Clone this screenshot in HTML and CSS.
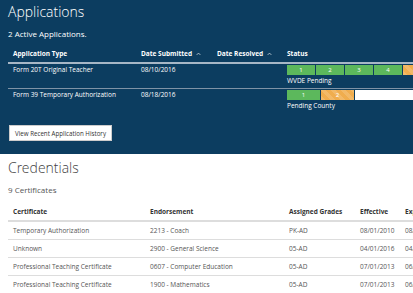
FILE: index.html
```html
<!DOCTYPE html>
<html lang="en">
<head>
    <meta charset="UTF-8">
    <title>Applications</title>
    <link rel="stylesheet" href="styles.css">
</head>
<body>

<div class="panel">
    <h1>Applications</h1>
    <p class="count">2 Active Applications.</p>

    <table class="apps">
        <thead>
            <tr>
                <th class="c-type">Application Type</th>
                <th class="c-sub">Date Submitted <svg class="caret" viewBox="0 0 8 5"><path d="M1 4 L4 1 L7 4"/></svg></th>
                <th class="c-res">Date Resolved <svg class="caret" viewBox="0 0 8 5"><path d="M1 4 L4 1 L7 4"/></svg></th>
                <th class="c-status">Status</th>
            </tr>
        </thead>
        <tbody>
            <tr>
                <td>Form 20T Original Teacher</td>
                <td>08/10/2016</td>
                <td></td>
                <td>
                    <div class="progress">
                        <span class="seg done">1</span>
                        <span class="seg done">2</span>
                        <span class="seg done">3</span>
                        <span class="seg done">4</span>
                        <span class="seg pending">5</span>
                    </div>
                    <div class="status-text">WVDE Pending</div>
                </td>
            </tr>
            <tr>
                <td>Form 39 Temporary Authorization</td>
                <td>08/18/2016</td>
                <td></td>
                <td>
                    <div class="progress">
                        <span class="seg wide done">1</span>
                        <span class="seg wide pending">2</span>
                        <span class="seg rest"></span>
                    </div>
                    <div class="status-text">Pending County</div>
                </td>
            </tr>
        </tbody>
    </table>

    <button class="btn">View Recent Application History</button>
</div>

<div class="section">
    <h2>Credentials</h2>
    <p class="count">9 Certificates</p>

    <table class="creds">
        <thead>
            <tr>
                <th class="k-cert">Certificate</th>
                <th class="k-end">Endorsement</th>
                <th class="k-grade">Assigned Grades</th>
                <th class="k-eff">Effective</th>
                <th class="k-exp">Expiration</th>
            </tr>
        </thead>
        <tbody>
            <tr><td>Temporary Authorization</td><td>2213 - Coach</td><td>PK-AD</td><td>08/01/2010</td><td>08/01/2011</td></tr>
            <tr><td>Unknown</td><td>2900 - General Science</td><td>05-AD</td><td>04/01/2016</td><td>04/01/2017</td></tr>
            <tr><td>Professional Teaching Certificate</td><td>0607 - Computer Education</td><td>05-AD</td><td>07/01/2013</td><td>06/30/2018</td></tr>
            <tr><td>Professional Teaching Certificate</td><td>1900 - Mathematics</td><td>05-AD</td><td>07/01/2013</td><td>06/30/2018</td></tr>
        </tbody>
    </table>
</div>

</body>
</html>
```

FILE: styles.css
```css
body {
    margin: 0;
    font-family: "Open Sans", "Noto Sans", sans-serif;
    background-color: #fff;
    overflow: hidden;
    width: 413px;
    height: 293px;
}
.panel {
    background-color: #0c3d60;
    color: #fff;
    height: 154px;
    padding-left: 8px;
    width: 560px;
    box-sizing: border-box;
}
h1, h2 {
    margin: 0;
    font-family: "Open Sans Light", "Open Sans", sans-serif;
    font-weight: 300;
    font-size: 14px;
    line-height: 20px;
}
h1 {
    padding-top: 2px;
}
h2 {
    color: #444;
    padding-top: 4px;
}
.count {
    margin: 0;
    font-size: 8px;
    line-height: 12px;
    padding-top: 6px;
}
table {
    border-collapse: collapse;
    table-layout: fixed;
    font-size: 6.5px;
}
th {
    text-align: left;
    font-weight: 700;
    padding: 0 5px;
}
td {
    padding: 0 5px;
}

/* applications */
.apps {
    margin-top: 5px;
    width: 540px;
}
.apps thead tr {
    height: 18px;
    border-bottom: 2px solid #a7b7c6;
}
.apps tbody tr {
    height: 25px;
    border-bottom: 1px solid #7f93a6;
}
.apps tbody tr:last-child {
    border-bottom: none;
}
.apps td {
    vertical-align: top;
    padding-top: 1px;
    line-height: 10px;
}
.c-type { width: 118px; }
.c-sub { width: 66px; }
.c-res { width: 60px; }
.caret {
    width: 5px;
    height: 4px;
    margin-left: 2px;
    fill: none;
    stroke: #fff;
    stroke-width: 1;
}
.progress {
    display: flex;
    gap: 1px;
    height: 10px;
}
.seg {
    display: flex;
    align-items: center;
    justify-content: center;
    width: 28px;
    color: #fff;
    font-size: 6px;
}
.seg.wide { width: 33px; }
.done { background-color: #5cb85c; }
.pending {
    background-color: #f0ad4e;
    background-image: linear-gradient(45deg, rgba(255,255,255,.15) 25%, transparent 25%, transparent 50%, rgba(255,255,255,.15) 50%, rgba(255,255,255,.15) 75%, transparent 75%, transparent);
    background-size: 10px 10px;
}
.rest {
    flex: 1;
    background-color: #fff;
}
.status-text {
    margin-top: 1px;
}
.btn {
    display: block;
    margin-top: 12px;
    margin-left: 1px;
    background-color: #fff;
    color: #333;
    border: 1px solid #ccc;
    font-family: inherit;
    font-size: 6.2px;
    height: 16px;
    padding: 0 5px;
}

/* credentials */
.section {
    padding-left: 8px;
    color: #555;
}
.creds {
    margin-top: 7px;
    width: 560px;
    color: #555;
}
.creds th {
    color: #333;
}
.creds td {
    vertical-align: middle;
}
.creds thead tr {
    height: 18px;
    border-bottom: 2px solid #ddd;
}
.creds tbody tr {
    height: 18px;
    border-bottom: 1px solid #ddd;
}
.k-cert { width: 127px; }
.k-end { width: 129px; }
.k-grade { width: 61px; }
.k-eff { width: 35px; }
```
